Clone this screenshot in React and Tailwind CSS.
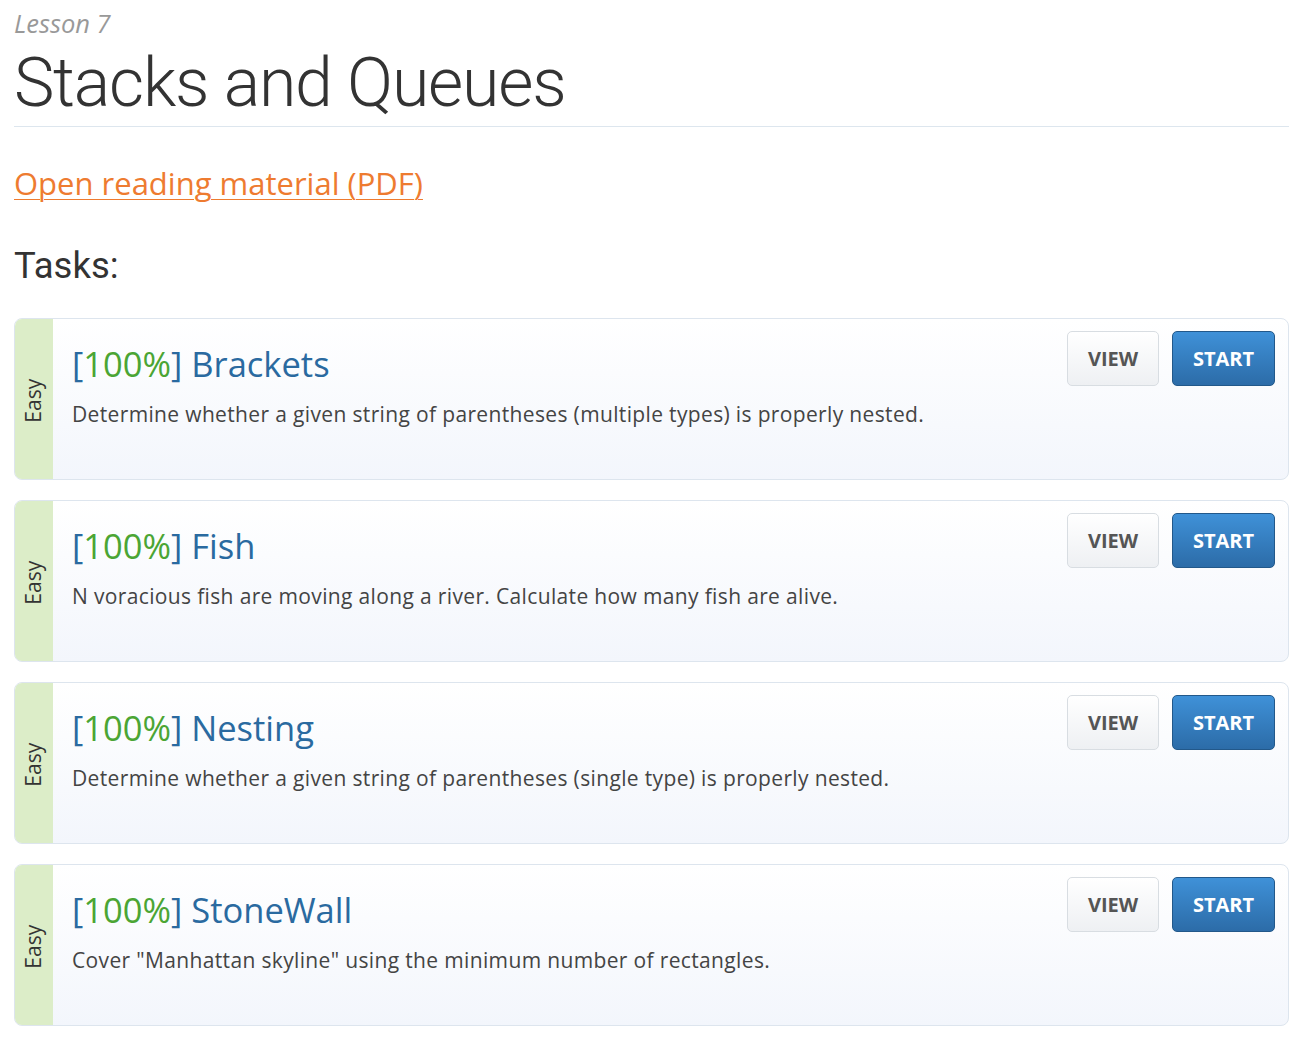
const tasks = [
  {
    name: 'Brackets',
    score: 100,
    description: 'Determine whether a given string of parentheses (multiple types) is properly nested.',
  },
  {
    name: 'Fish',
    score: 100,
    description: 'N voracious fish are moving along a river. Calculate how many fish are alive.',
  },
  {
    name: 'Nesting',
    score: 100,
    description: 'Determine whether a given string of parentheses (single type) is properly nested.',
  },
  {
    name: 'StoneWall',
    score: 100,
    description: 'Cover "Manhattan skyline" using the minimum number of rectangles.',
  },
];

const TaskCard = ({ task }) => (
  <div className="flex h-[162px] rounded-[8px] border border-[#dde5ee] overflow-hidden bg-gradient-to-b from-white to-[#f3f6fc]">
    <div className="w-[38px] shrink-0 bg-[#dcedc8] flex items-center justify-center pt-[4px]">
      <span className="-rotate-90 text-[21px] text-[#333] whitespace-nowrap font-['Open_Sans',sans-serif]">
        Easy
      </span>
    </div>
    <div className="flex-1 flex pl-[19px] pr-[13px] pt-[12px]">
      <div className="flex-1 pt-[12px]">
        <h3 className="text-[34.5px] leading-[42px] text-[#2a6aa0] font-['Open_Sans',sans-serif]">
          [<span className="text-[#4ba534]">{task.score}%</span>] {task.name}
        </h3>
        <p className="mt-[14px] text-[21px] tracking-[0.35px] leading-[30px] text-[#444] font-['Open_Sans',sans-serif]">
          {task.description}
        </p>
      </div>
      <div className="flex gap-[13px] items-start">
        <button className="w-[92px] h-[55px] rounded-[5px] border border-[#d8dde2] bg-gradient-to-b from-white to-[#eef0f3] text-[#555] text-[20px] font-bold font-['Open_Sans',sans-serif]">
          VIEW
        </button>
        <button className="w-[103px] h-[55px] rounded-[5px] border border-[#22588a] bg-gradient-to-b from-[#3f91d8] to-[#2c6ca8] text-white text-[20px] font-bold font-['Open_Sans',sans-serif]">
          START
        </button>
      </div>
    </div>
  </div>
);

export default function App() {
  return (
    <div className="min-h-screen bg-white pl-[14px] pr-[17px] pt-[8px] pb-[12px]">
      <p className="text-[25.5px] leading-[30px] italic text-[#999] font-['Open_Sans',sans-serif]">Lesson 7</p>
      <h1 className="mt-[3px] text-[68px] tracking-[-1.2px] leading-[84px] font-light text-[#333] font-['Roboto',sans-serif]">
        Stacks and Queues
      </h1>
      <div className="mt-[1px] border-t border-[#dde6ee]" />

      <a
        href="#"
        className="inline-block mt-[36px] text-[31px] leading-[40px] text-[#ee7b30] underline underline-offset-[4px] decoration-1 font-['Open_Sans',sans-serif]"
      >
        Open reading material (PDF)
      </a>

      <h2 className="mt-[41px] text-[36.5px] leading-[44px] text-[#333] font-['Roboto',sans-serif]">Tasks:</h2>

      <div className="mt-[30px] flex flex-col gap-[20px]">
        {tasks.map((task) => (
          <TaskCard key={task.name} task={task} />
        ))}
      </div>
    </div>
  );
}
